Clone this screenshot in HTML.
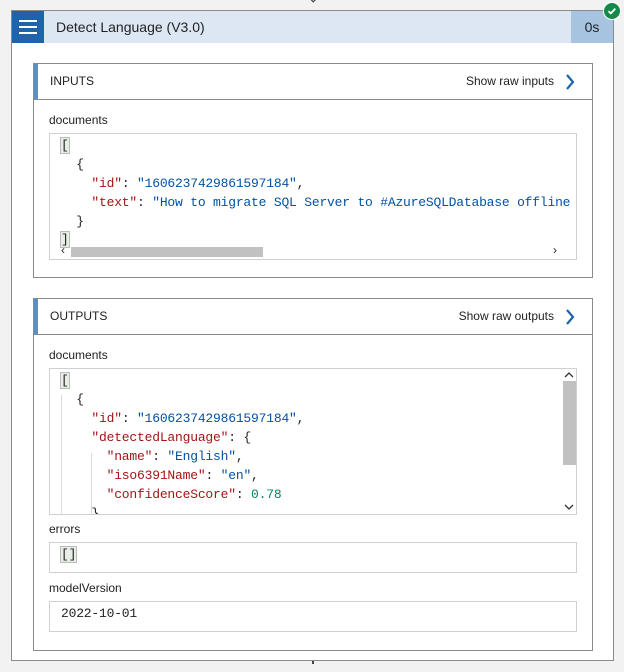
<!DOCTYPE html>
<html><head><meta charset="utf-8"><style>
*{box-sizing:border-box;margin:0;padding:0}
body{width:624px;height:672px;background:#f2f2f2;font-family:"Liberation Sans",sans-serif;position:relative;overflow:hidden;color:#222}
.abs{position:absolute}
.card{left:11px;top:10px;width:603px;height:651px;background:#fff;border:1px solid #8a8a8a}
.hdr{left:12px;top:11px;width:601px;height:32px;background:#dce7f3}
.ico{left:12px;top:11px;width:32px;height:32px;background:#1f63ab}
.ico i{position:absolute;left:7px;width:18px;height:2px;background:#fff}
.time{left:571px;top:11px;width:42px;height:32px;background:#a6c3e0;font-size:14px;line-height:32px;text-align:center}
.sec{border:1px solid #8a8a8a;background:#fff}
.sh{height:36px;border-bottom:1px solid #8a8a8a;border-left:4px solid #5b8fc7;font-size:12px;line-height:35px;padding-left:12px;position:relative}
.sh span{position:absolute;right:38px;top:0}
.lbl{font-size:12px}
.box{border:1px solid #d0d0d0;background:#fff;font-family:"Liberation Mono",monospace;font-size:13px;letter-spacing:-0.2px;white-space:pre;overflow:hidden}
.k{color:#a31515}.s{color:#0451a5}.n{color:#098658}
.ln{position:absolute;left:11px;line-height:19px}
</style></head><body>
<div class="abs" style="left:305px;top:0;width:14px;height:8px;border-right:2px solid #444;border-bottom:2px solid #444;transform:rotate(45deg) scale(.6);top:-6px"></div>
<div class="abs card"></div>
<div class="abs hdr"></div>
<div class="abs ico"><i style="top:9px"></i><i style="top:15px"></i><i style="top:21px"></i></div>
<div class="abs" style="left:56px;top:11px;line-height:32px;font-size:14px">Detect Language (V3.0)</div>
<div class="abs time">0s</div>
<div class="abs" style="left:603px;top:2px;width:18px;height:18px;border-radius:50%;background:#138a4a;border:1px solid #fff"><svg width="16" height="16" viewBox="0 0 16 16"><path d="M4.5 8.2l2.3 2.2 4.5-4.8" stroke="#fff" stroke-width="1.8" fill="none"/></svg></div>

<div class="abs sec" style="left:33px;top:63px;width:560px;height:215px">
<div class="sh">INPUTS<span>Show raw inputs</span><svg class="abs" style="right:17px;top:10px" width="10" height="16"><path d="M2 1l6 7-6 7" stroke="#1f63ab" stroke-width="2.2" fill="none"/></svg></div>
</div>
<div class="abs lbl" style="left:49px;top:113px">documents</div>
<div class="abs box" style="left:49px;top:133px;width:528px;height:127px">
<div class="ln" style="top:2px"><span style="background:#e6eee6;outline:1px solid #bbb">[</span></div>
<div class="ln" style="top:21px">  {</div>
<div class="ln" style="top:40px">    <span class="k">"id"</span>: <span class="s">"1606237429861597184"</span>,</div>
<div class="ln" style="top:59px">    <span class="k">"text"</span>: <span class="s">"How to migrate SQL Server to #AzureSQLDatabase offline</span></div>
<div class="ln" style="top:78px">  }</div>
<div class="ln" style="top:96px"><span style="background:#e6eee6;outline:1px solid #bbb">]</span></div>
<div class="abs" style="left:21px;top:113px;width:192px;height:10px;background:#c1c1c1"></div>
<div class="abs" style="left:11px;top:109px;font-size:12px;font-family:'Liberation Sans'">‹</div>
<div class="abs" style="left:503px;top:109px;font-size:12px;font-family:'Liberation Sans'">›</div>
</div>

<div class="abs sec" style="left:33px;top:298px;width:560px;height:353px">
<div class="sh">OUTPUTS<span>Show raw outputs</span><svg class="abs" style="right:17px;top:10px" width="10" height="16"><path d="M2 1l6 7-6 7" stroke="#1f63ab" stroke-width="2.2" fill="none"/></svg></div>
</div>
<div class="abs lbl" style="left:49px;top:348px">documents</div>
<div class="abs box" style="left:49px;top:368px;width:528px;height:147px">
<div class="ln" style="top:2px"><span style="background:#e6eee6;outline:1px solid #bbb">[</span></div>
<div class="ln" style="top:21px">  {</div>
<div class="ln" style="top:40px">    <span class="k">"id"</span>: <span class="s">"1606237429861597184"</span>,</div>
<div class="ln" style="top:59px">    <span class="k">"detectedLanguage"</span>: {</div>
<div class="ln" style="top:78px">      <span class="k">"name"</span>: <span class="s">"English"</span>,</div>
<div class="ln" style="top:97px">      <span class="k">"iso6391Name"</span>: <span class="s">"en"</span>,</div>
<div class="ln" style="top:116px">      <span class="k">"confidenceScore"</span>: <span class="n">0.78</span></div>
<div class="ln" style="top:135px">    }</div>
<div class="abs" style="left:11px;top:26px;width:1px;height:120px;background:#ddd"></div>
<div class="abs" style="left:41px;top:84px;width:1px;height:62px;background:#ddd"></div>
<div class="abs" style="left:513px;top:12px;width:14px;height:84px;background:#c1c1c1"></div>
<svg class="abs" style="left:514px;top:2px" width="10" height="8"><path d="M1 6l4-4 4 4" stroke="#333" stroke-width="1.3" fill="none"/></svg>
<svg class="abs" style="left:514px;top:134px" width="10" height="8"><path d="M1 2l4 4 4-4" stroke="#333" stroke-width="1.3" fill="none"/></svg>
</div>
<div class="abs lbl" style="left:49px;top:522px">errors</div>
<div class="abs box" style="left:49px;top:542px;width:528px;height:31px">
<div class="ln" style="top:2px"><span style="background:#e6eee6;outline:1px solid #bbb">[]</span></div>
</div>
<div class="abs lbl" style="left:49px;top:581px">modelVersion</div>
<div class="abs box" style="left:49px;top:601px;width:528px;height:31px">
<div class="ln" style="top:2px">2022-10-01</div>
</div>
<div class="abs" style="left:312px;top:661px;width:2px;height:3px;background:#444"></div>
</body></html>
